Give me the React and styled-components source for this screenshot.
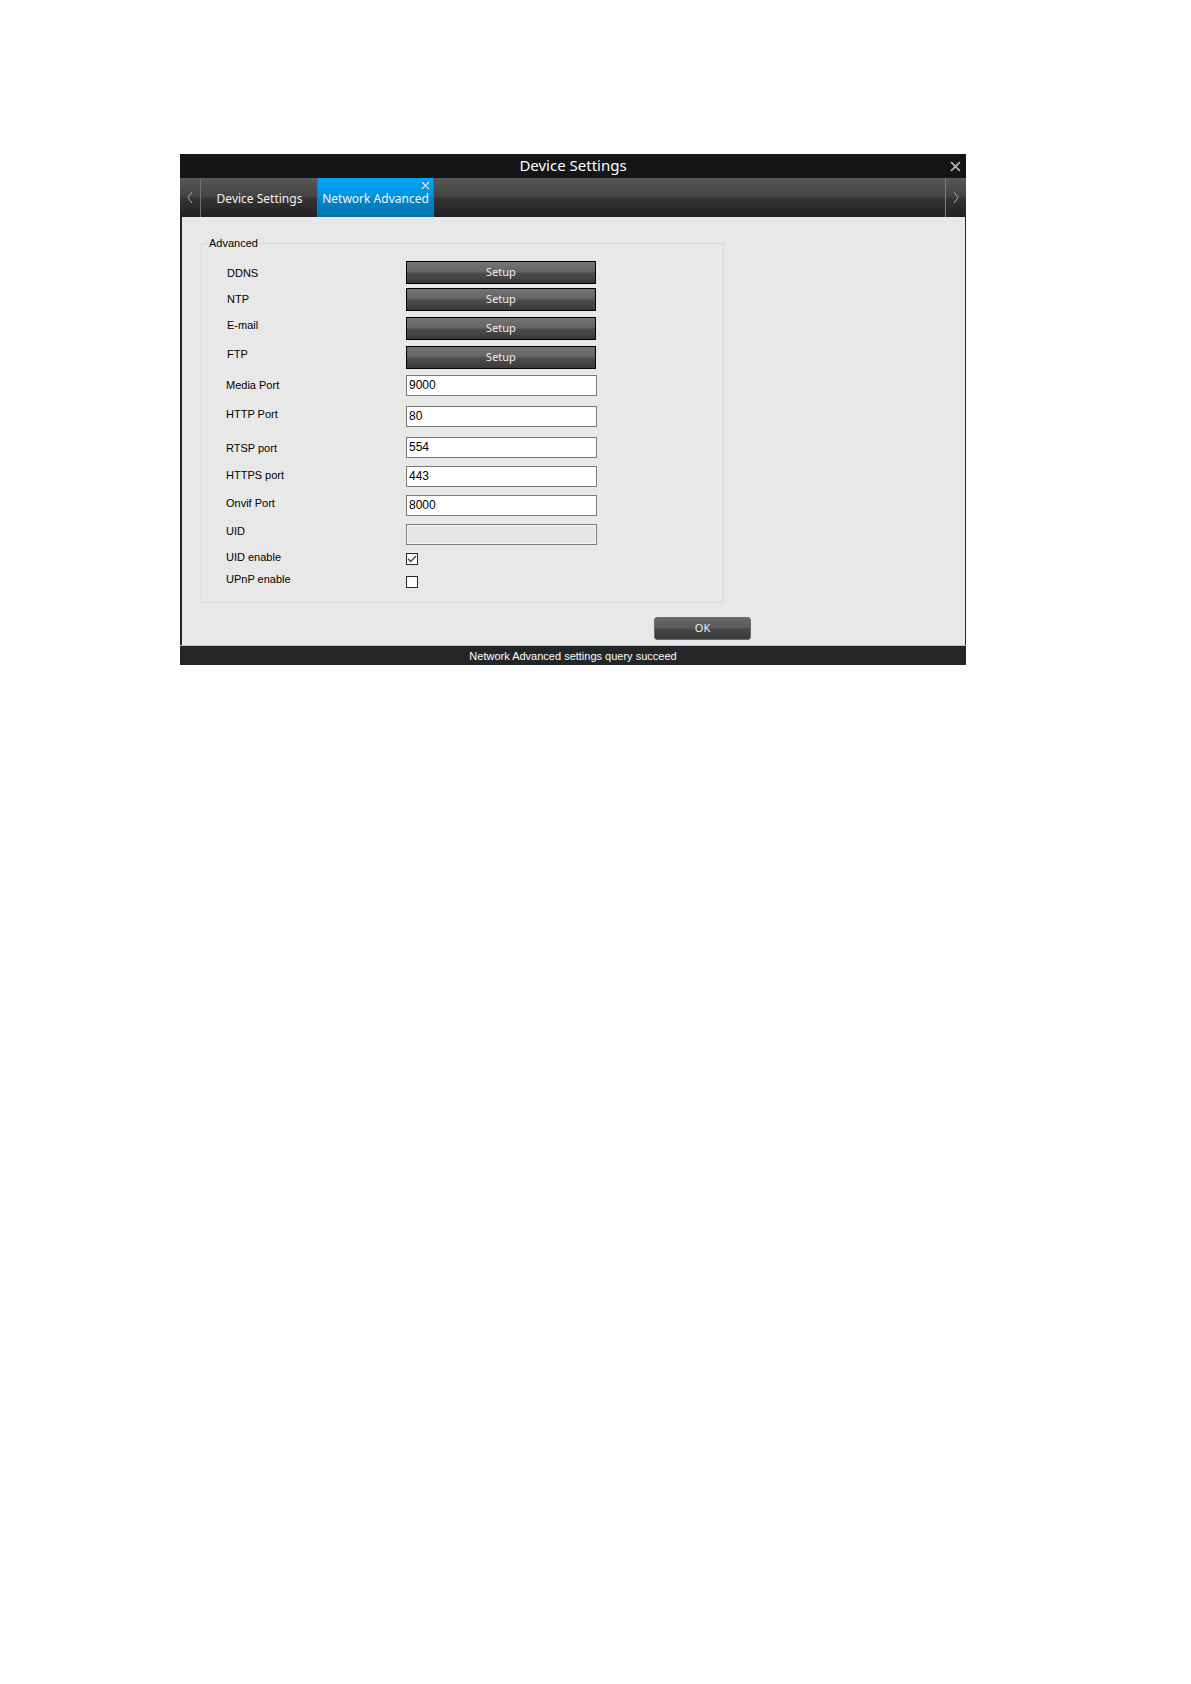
import styled, { createGlobalStyle, css } from "styled-components";
import { useState } from "react";

const GlobalStyle = createGlobalStyle`
  *, *::before, *::after {
    box-sizing: border-box;
  }

  body {
    margin: 0;
    background-color: #fff;
    font-family: "Liberation Sans", Arial, sans-serif;
    font-size: 11px;
    color: #000;
  }

  button, input {
    font-family: inherit;
    margin: 0;
  }
`;

const Page = styled.main`
  padding: 154px 225px 154px 180px;
`;

const Window = styled.section`
  display: flex;
  flex-direction: column;
  background-color: #e8e8e8;
`;

const TitleBar = styled.header`
  display: grid;
  grid-template-columns: 22px 1fr 22px;
  align-items: center;
  height: 24px;
  background-color: #141516;
`;

const Title = styled.h1`
  grid-column: 2;
  margin: 0;
  font: 400 15px/22px "Noto Sans", sans-serif;
  text-align: center;
  color: #fff;
  align-self: start;
`;

const IconButton = styled.button`
  display: flex;
  align-items: center;
  justify-content: center;
  padding: 0;
  border: none;
  background: none;
  cursor: pointer;
`;

const TabBar = styled.nav`
  display: flex;
  height: 39px;
  background: linear-gradient(#585858, #444 45%, #343434 55%, #212121);
`;

const ArrowButton = styled(IconButton)`
  width: 21px;

  ${(props) =>
    props.$side === "left"
      ? css`
          border-right: 1px solid #707070;
        `
      : css`
          margin-left: auto;
          border-left: 1px solid #808080;
        `}
`;

const TabList = styled.div`
  display: flex;
  padding-left: 1px;
`;

const TabItem = styled.div`
  position: relative;
  display: flex;
  width: 116px;
  border-right: 1px solid #666;
`;

const Tab = styled.button`
  flex: 1;
  padding: 2px 0 0;
  border: none;
  background: none;
  font: 400 12px/16px "Noto Sans", sans-serif;
  color: #f4f4f4;
  white-space: nowrap;
  cursor: pointer;

  ${(props) =>
    props.$active &&
    css`
      background: linear-gradient(#03a2f6, #0394e0 45%, #0286cb 55%, #0272ae);
    `}
`;

const TabClose = styled(IconButton)`
  position: absolute;
  top: 3px;
  right: 3px;
`;

const Body = styled.form`
  display: flex;
  flex-direction: column;
  padding: 19px 0 5px 19px;
  border: solid #222628;
  border-width: 0 1px 0 2px;
`;

const Group = styled.fieldset`
  width: 523px;
  max-width: 100%;
  min-width: 0;
  margin: 0;
  padding: 11px 0 14px;
  border: 1px solid #dadada;
`;

const Legend = styled.legend`
  margin-left: 7px;
  padding: 0;
  line-height: 14px;
`;

const Row = styled.div`
  display: grid;
  grid-template-columns: 204px 191px;
  align-items: start;
  height: ${(props) => props.$height}px;
`;

const Label = styled.label`
  padding-left: ${(props) => (props.$indent ? 25 : 24)}px;
  line-height: ${(props) => props.$line}px;
`;

const SetupButton = styled.button`
  width: 190px;
  height: 23px;
  padding: 0 0 2px;
  border: 1px solid #000;
  background: linear-gradient(#757575, #636363 45%, #4d4d4d 55%, #393939);
  font: 400 11px/16px "Noto Sans", sans-serif;
  color: #f0f0f0;
  cursor: pointer;
`;

const Field = styled.input`
  width: 100%;
  height: 21px;
  padding: 0 2px 1px;
  border: 1px solid #7a7a7a;
  border-radius: 0;
  background-color: #fff;
  font-size: 12px;
  color: #000;

  &:disabled {
    background-color: #e6e6e6;
    box-shadow: inset 0 0 0 1px #f6f6f6;
  }
`;

const Checkbox = styled.input`
  appearance: none;
  display: grid;
  place-items: center;
  width: 12px;
  height: 12px;
  border: 1px solid #2a2a2a;
  background-color: #fff;
`;

const CheckBox = styled.span`
  display: grid;
  width: 12px;

  & > * {
    grid-area: 1 / 1;
  }

  & > svg {
    pointer-events: none;
  }
`;

const OkButton = styled.button`
  align-self: flex-end;
  width: 97px;
  height: 23px;
  margin: 14px 214px 0 0;
  padding: 0 0 1px;
  border: 1px solid #6a6a6a;
  border-radius: 3px;
  background: linear-gradient(#686868, #5a5a5a 45%, #464646 55%, #3a3a3a);
  font: 400 11px/16px "Noto Sans", sans-serif;
  color: #f0f0f0;
  cursor: pointer;
`;

const StatusBar = styled.footer`
  height: 20px;
  border-top: 1px solid #c4c6c6;
  background-color: #222628;
  line-height: 20px;
  text-align: center;
  color: #fff;
`;

const ROWS = [
  { id: "ddns", label: "DDNS", type: "setup", height: 27, line: 24 },
  { id: "ntp", label: "NTP", type: "setup", height: 29, line: 22 },
  { id: "email", label: "E-mail", type: "setup", height: 29, line: 16 },
  { id: "ftp", label: "FTP", type: "setup", height: 29, line: 16 },
  { id: "media", label: "Media Port", value: "9000", height: 31, line: 20 },
  { id: "http", label: "HTTP Port", value: "80", height: 31, line: 16 },
  { id: "rtsp", label: "RTSP port", value: "554", height: 29, line: 22 },
  { id: "https", label: "HTTPS port", value: "443", height: 29, line: 18 },
  { id: "onvif", label: "Onvif Port", value: "8000", height: 29, line: 16 },
  { id: "uid", label: "UID", value: "", disabled: true, height: 29, line: 14 },
  { id: "uidEnable", label: "UID enable", type: "check", value: true, height: 23, line: 8 },
  { id: "upnp", label: "UPnP enable", type: "check", value: false, height: 12, line: 6 },
];

function Cross({ size, color, width = 1 }) {
  return (
    <svg width={size} height={size} viewBox="0 0 10 10" aria-hidden="true">
      <path d="M1 1 9 9M9 1 1 9" fill="none" stroke={color} strokeWidth={width} />
    </svg>
  );
}

function Chevron({ d }) {
  return (
    <svg width="6" height="13" viewBox="0 0 6 13" aria-hidden="true">
      <path d={d} fill="none" stroke="#aaa" />
    </svg>
  );
}

function SettingRow({ row, value, onChange }) {
  return (
    <Row $height={row.height}>
      <Label htmlFor={row.id} $line={row.line} $indent={row.type === "setup"}>
        {row.label}
      </Label>
      {row.type === "setup" && (
        <SetupButton type="button" id={row.id}>
          Setup
        </SetupButton>
      )}
      {row.type === "check" && (
        <CheckBox>
          <Checkbox
            type="checkbox"
            id={row.id}
            checked={value}
            onChange={(e) => onChange(row.id, e.target.checked)}
          />
          {value && (
            <svg width="12" height="12" viewBox="0 0 12 12" aria-hidden="true">
              <path
                d="M2 5.8 4.7 8.5 10 3"
                fill="none"
                stroke="#444"
                strokeWidth="1.4"
              />
            </svg>
          )}
        </CheckBox>
      )}
      {!row.type && (
        <Field
          type="text"
          id={row.id}
          value={value}
          disabled={row.disabled}
          onChange={(e) => onChange(row.id, e.target.value)}
        />
      )}
    </Row>
  );
}

function App() {
  const [values, setValues] = useState(() =>
    Object.fromEntries(ROWS.map((row) => [row.id, row.value]))
  );

  function handleChange(id, value) {
    setValues((current) => ({ ...current, [id]: value }));
  }

  return (
    <>
      <GlobalStyle />
      <Page>
        <Window>
          <TitleBar>
            <Title>Device Settings</Title>
            <IconButton type="button" aria-label="Close window">
              <Cross size={11} color="#b4b4b4" width={1.6} />
            </IconButton>
          </TitleBar>
          <TabBar>
            <ArrowButton type="button" $side="left" aria-label="Previous tabs">
              <Chevron d="M5 1 1 6.5 5 12" />
            </ArrowButton>
            <TabList>
              <TabItem>
                <Tab type="button">Device Settings</Tab>
              </TabItem>
              <TabItem>
                <Tab type="button" $active>
                  Network Advanced
                </Tab>
                <TabClose type="button" aria-label="Close tab">
                  <Cross size={9} color="#e6f4fc" width={1.2} />
                </TabClose>
              </TabItem>
            </TabList>
            <ArrowButton type="button" $side="right" aria-label="Next tabs">
              <Chevron d="M1 1 5 6.5 1 12" />
            </ArrowButton>
          </TabBar>
          <Body onSubmit={(e) => e.preventDefault()}>
            <Group>
              <Legend>Advanced</Legend>
              {ROWS.map((row) => (
                <SettingRow
                  key={row.id}
                  row={row}
                  value={values[row.id]}
                  onChange={handleChange}
                />
              ))}
            </Group>
            <OkButton type="submit">OK</OkButton>
          </Body>
          <StatusBar>Network Advanced settings query succeed</StatusBar>
        </Window>
      </Page>
    </>
  );
}

export default App;
